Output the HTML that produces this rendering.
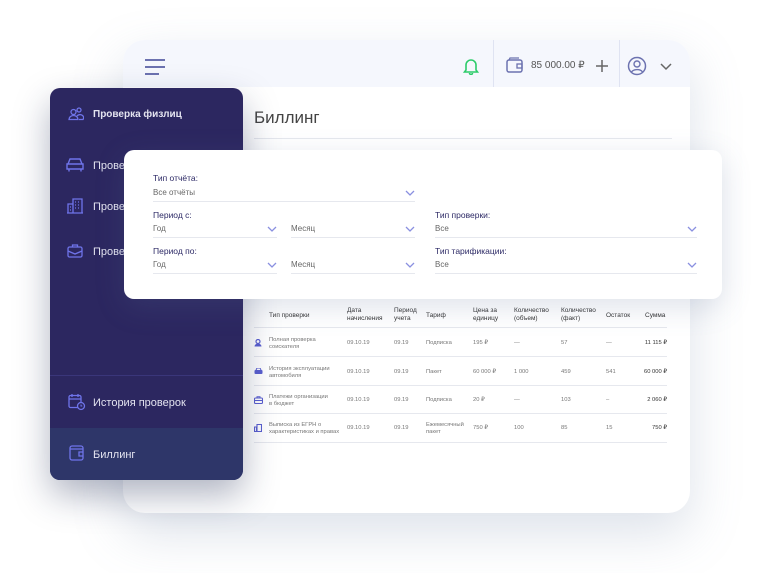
<!DOCTYPE html>
<html><head><meta charset="utf-8"><style>
*{margin:0;padding:0;box-sizing:border-box}
body{width:765px;height:573px;background:#fff;font-family:"Liberation Sans",sans-serif;position:relative;overflow:hidden}
.abs{position:absolute}
.card{left:123px;top:40px;width:567px;height:473px;background:#fff;border-radius:22px;box-shadow:0 20px 50px rgba(120,140,170,.25);overflow:hidden}
.hdr{left:0;top:0;width:567px;height:47px;background:#f5f7fd}
.side{left:50px;top:88px;width:193px;height:392px;background:#2c2760;border-radius:10px;box-shadow:0 15px 35px rgba(30,40,80,.35);overflow:hidden;color:#e4e4f0;font-size:11px}
.modal{left:124px;top:150px;width:598px;height:149px;background:#fff;border-radius:10px;box-shadow:0 8px 30px rgba(90,110,150,.2)}
.lbl{position:absolute;font-size:8.5px;color:#2d2a66}
.val{position:absolute;font-size:8px;color:#666;border-bottom:1px solid #e6e8ee;height:14px}
.chev{position:absolute;right:0;top:1px}
.th{position:absolute;font-size:6.5px;color:#333;line-height:8px}
.td{position:absolute;font-size:5.8px;color:#777;line-height:7px}
.hr{position:absolute;left:254px;width:413px;height:1px;background:#e6e8ee}
</style></head><body>
<div class="abs card">
 <div class="abs hdr">
  <svg class="abs" style="left:20px;top:18px" width="24" height="18"><path d="M2 2h20M2 9h20M2 16h14" stroke="#6c72b0" stroke-width="2"/></svg>
  <svg class="abs" style="left:340px;top:17px" width="16" height="18"><path d="M3 13V8a5 5 0 0110 0v5l1.5 2h-13z M6.5 16a1.5 1.5 0 003 0" stroke="#2dcc6a" stroke-width="1.6" fill="none"/></svg>
  <div class="abs" style="left:370px;top:0;width:1px;height:47px;background:#dfe3f2"></div>
  <svg class="abs" style="left:383px;top:17px" width="18" height="17"><rect x="1" y="3" width="15" height="12" rx="2" stroke="#6c72b0" stroke-width="1.5" fill="none"/><path d="M3 3l1-2h9" stroke="#6c72b0" stroke-width="1.3" fill="none"/><rect x="11" y="7" width="5" height="4" stroke="#6c72b0" stroke-width="1.3" fill="none"/></svg>
  <div class="abs" style="left:408px;top:20px;font-size:10px;color:#555">85 000.00 ₽</div>
  <svg class="abs" style="left:472px;top:19px" width="14" height="14"><path d="M7 1v12M1 7h12" stroke="#666" stroke-width="1.5"/></svg>
  <div class="abs" style="left:496px;top:0;width:1px;height:47px;background:#dfe3f2"></div>
  <svg class="abs" style="left:504px;top:16px" width="20" height="20"><circle cx="10" cy="10" r="8.5" stroke="#6c72b0" stroke-width="1.5" fill="none"/><circle cx="10" cy="8" r="3" stroke="#6c72b0" stroke-width="1.4" fill="none"/><path d="M4.5 16a6 4 0 0111 0" stroke="#6c72b0" stroke-width="1.4" fill="none"/></svg>
  <svg class="abs" style="left:536px;top:22px" width="14" height="9"><path d="M2 2l5 5 5-5" stroke="#666" stroke-width="1.5" fill="none"/></svg>
 </div>
 <div class="abs" style="left:131px;top:68px;font-size:17px;color:#444">Биллинг</div>
 <div class="abs" style="left:131px;top:98px;width:418px;height:1px;background:#e6e8ee"></div>
</div>

<div class="th" style="left:269px;top:312px">Тип проверки</div>
<div class="th" style="left:347px;top:307px">Дата<br>начисления</div>
<div class="th" style="left:394px;top:307px">Период<br>учета</div>
<div class="th" style="left:426px;top:312px">Тариф</div>
<div class="th" style="left:473px;top:307px">Цена за<br>единицу</div>
<div class="th" style="left:514px;top:307px">Количество<br>(объем)</div>
<div class="th" style="left:561px;top:307px">Количество<br>(факт)</div>
<div class="th" style="left:606px;top:312px">Остаток</div>
<div class="th" style="left:645px;top:312px">Сумма</div>
<div class="hr" style="top:327px"></div>
<div class="hr" style="top:356px"></div>
<div class="hr" style="top:385px"></div>
<div class="hr" style="top:413px"></div>
<div class="hr" style="top:442px"></div>

<svg class="abs" style="left:254px;top:339px" width="9" height="8"><circle cx="4" cy="2.5" r="2" fill="none" stroke="#5a5fd0" stroke-width="1.2"/><path d="M0.5 7.5a3.5 3 0 017 0z" fill="#5a5fd0"/></svg>
<div class="td" style="left:269px;top:337px">Полная проверка<br>соискателя</div>
<div class="td" style="left:347px;top:340px">09.10.19</div><div class="td" style="left:394px;top:340px">09.19</div><div class="td" style="left:426px;top:340px">Подписка</div><div class="td" style="left:473px;top:340px">195 ₽</div><div class="td" style="left:514px;top:340px">—</div><div class="td" style="left:561px;top:340px">57</div><div class="td" style="left:606px;top:340px">—</div><div class="td" style="left:600px;width:67px;text-align:right;top:340px;color:#333">11 115 ₽</div>

<svg class="abs" style="left:254px;top:368px" width="9" height="7"><rect x="0.5" y="2" width="8" height="4" rx="1" fill="#5a5fd0"/><path d="M2 2l1-2h3l1 2" fill="none" stroke="#5a5fd0"/></svg>
<div class="td" style="left:269px;top:366px">История эксплуатации<br>автомобиля</div>
<div class="td" style="left:347px;top:369px">09.10.19</div><div class="td" style="left:394px;top:369px">09.19</div><div class="td" style="left:426px;top:369px">Пакет</div><div class="td" style="left:473px;top:369px">60 000 ₽</div><div class="td" style="left:514px;top:369px">1 000</div><div class="td" style="left:561px;top:369px">459</div><div class="td" style="left:606px;top:369px">541</div><div class="td" style="left:600px;width:67px;text-align:right;top:369px;color:#333">60 000 ₽</div>

<svg class="abs" style="left:254px;top:396px" width="9" height="8"><rect x="0.5" y="2" width="8" height="5.5" rx="1" fill="none" stroke="#5a5fd0" stroke-width="1.1"/><path d="M3 2V0.7h3V2M0.5 4.5h8" stroke="#5a5fd0" fill="none"/></svg>
<div class="td" style="left:269px;top:394px">Платежи организации<br>в бюджет</div>
<div class="td" style="left:347px;top:397px">09.10.19</div><div class="td" style="left:394px;top:397px">09.19</div><div class="td" style="left:426px;top:397px">Подписка</div><div class="td" style="left:473px;top:397px">20 ₽</div><div class="td" style="left:514px;top:397px">—</div><div class="td" style="left:561px;top:397px">103</div><div class="td" style="left:606px;top:397px">–</div><div class="td" style="left:600px;width:67px;text-align:right;top:397px;color:#333">2 060 ₽</div>

<svg class="abs" style="left:254px;top:424px" width="8" height="8"><path d="M0.5 7.5V3h2V7.5M3 7.5V0.5h4.5v7M0 7.5h8" fill="none" stroke="#5a5fd0" stroke-width="1.1"/></svg>
<div class="td" style="left:269px;top:422px">Выписка из ЕГРН о<br>характеристиках и правах</div>
<div class="td" style="left:347px;top:425px">09.10.19</div><div class="td" style="left:394px;top:425px">09.19</div><div class="td" style="left:426px;top:422px">Ежемесячный<br>пакет</div><div class="td" style="left:473px;top:425px">750 ₽</div><div class="td" style="left:514px;top:425px">100</div><div class="td" style="left:561px;top:425px">85</div><div class="td" style="left:606px;top:425px">15</div><div class="td" style="left:600px;width:67px;text-align:right;top:425px;color:#333">750 ₽</div>

<div class="abs side">
 <svg class="abs" style="left:18px;top:19px" width="16" height="14"><circle cx="5.5" cy="5" r="2.5" fill="none" stroke="#6f74ea" stroke-width="1.3"/><circle cx="11" cy="3" r="2" fill="none" stroke="#6f74ea" stroke-width="1.3"/><path d="M1 12.5a4.5 4 0 019 0zM9 9a3.5 3 0 016 3.5h-4" fill="none" stroke="#6f74ea" stroke-width="1.3"/></svg>
 <div class="abs" style="left:43px;top:21px;font-size:10px;font-weight:bold">Проверка физлиц</div>
 <svg class="abs" style="left:16px;top:69px" width="18" height="16"><path d="M2 7l2-5h10l2 5zM1 7h16v5H1zM3 12v2.5M15 12v2.5" fill="none" stroke="#6f74ea" stroke-width="1.4"/></svg>
 <div class="abs" style="left:43px;top:72px;font-size:11px">Проверка авто</div>
 <svg class="abs" style="left:17px;top:110px" width="16" height="16"><path d="M1 15V6h5v9M6 15V1h9v14M0 15h16M8 4h1M11 4h1M8 7h1M11 7h1M8 10h1M11 10h1M3 9h1M3 12h1" fill="none" stroke="#6f74ea" stroke-width="1.3"/></svg>
 <div class="abs" style="left:43px;top:113px;font-size:11px">Проверка компаний</div>
 <svg class="abs" style="left:17px;top:156px" width="16" height="14"><rect x="1" y="3" width="14" height="10" rx="1.5" fill="none" stroke="#6f74ea" stroke-width="1.3"/><path d="M5.5 3V1h5v2M1 7l7 3 7-3" fill="none" stroke="#6f74ea" stroke-width="1.3"/></svg>
 <div class="abs" style="left:43px;top:158px;font-size:11px">Проверка ИП</div>
 <div class="abs" style="left:0;top:287px;width:193px;height:1px;background:#3a367a"></div>
 <svg class="abs" style="left:18px;top:305px" width="18" height="18"><rect x="1" y="2.5" width="12" height="12" rx="1.5" fill="none" stroke="#6f74ea" stroke-width="1.3"/><path d="M1 6h12M4 1v3M10 1v3" stroke="#6f74ea" stroke-width="1.3"/><circle cx="13" cy="13" r="3.5" fill="#2c2760" stroke="#6f74ea" stroke-width="1.3"/><path d="M13 11.5V13h1.3" stroke="#6f74ea" fill="none"/></svg>
 <div class="abs" style="left:43px;top:309px;font-size:11px">История проверок</div>
 <div class="abs" style="left:0;top:340px;width:193px;height:52px;background:#2e3669"></div>
 <svg class="abs" style="left:19px;top:357px" width="15" height="16"><rect x="1" y="1" width="13" height="14" rx="2" fill="none" stroke="#6f74ea" stroke-width="1.3"/><path d="M1 4h13M14 7h-4v4h4" fill="none" stroke="#6f74ea" stroke-width="1.3"/></svg>
 <div class="abs" style="left:43px;top:361px;font-size:11px">Биллинг</div>
</div>

<div class="abs modal">
 <div class="lbl" style="left:29px;top:23px">Тип отчёта:</div>
 <div class="val" style="left:29px;top:38px;width:262px">Все отчёты<svg class="chev" width="10" height="8"><path d="M1 2l4 4 4-4" stroke="#8a90e0" stroke-width="1.3" fill="none"/></svg></div>
 <div class="lbl" style="left:29px;top:60px">Период с:</div>
 <div class="val" style="left:29px;top:74px;width:124px">Год<svg class="chev" width="10" height="8"><path d="M1 2l4 4 4-4" stroke="#8a90e0" stroke-width="1.3" fill="none"/></svg></div>
 <div class="val" style="left:167px;top:74px;width:124px">Месяц<svg class="chev" width="10" height="8"><path d="M1 2l4 4 4-4" stroke="#8a90e0" stroke-width="1.3" fill="none"/></svg></div>
 <div class="lbl" style="left:29px;top:96px">Период по:</div>
 <div class="val" style="left:29px;top:110px;width:124px">Год<svg class="chev" width="10" height="8"><path d="M1 2l4 4 4-4" stroke="#8a90e0" stroke-width="1.3" fill="none"/></svg></div>
 <div class="val" style="left:167px;top:110px;width:124px">Месяц<svg class="chev" width="10" height="8"><path d="M1 2l4 4 4-4" stroke="#8a90e0" stroke-width="1.3" fill="none"/></svg></div>
 <div class="lbl" style="left:311px;top:60px">Тип проверки:</div>
 <div class="val" style="left:311px;top:74px;width:262px">Все<svg class="chev" width="10" height="8"><path d="M1 2l4 4 4-4" stroke="#8a90e0" stroke-width="1.3" fill="none"/></svg></div>
 <div class="lbl" style="left:311px;top:96px">Тип тарификации:</div>
 <div class="val" style="left:311px;top:110px;width:262px">Все<svg class="chev" width="10" height="8"><path d="M1 2l4 4 4-4" stroke="#8a90e0" stroke-width="1.3" fill="none"/></svg></div>
</div>
</body></html>
